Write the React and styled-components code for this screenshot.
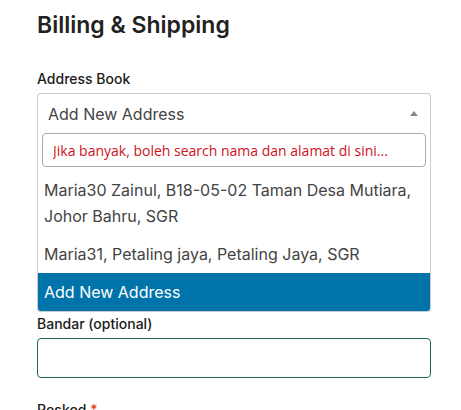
import React from "react";
import styled, { createGlobalStyle } from "styled-components";

const Global = createGlobalStyle`
  html, body { margin: 0; padding: 0; background: #fff; }
  body { font-family: Inter, "Noto Sans", sans-serif; color: #222; }
  * { box-sizing: border-box; }
`;

const Page = styled.div`
  width: 461px;
  height: 410px;
  overflow: hidden;
  padding: 10px 30px 0 37px;
`;

const Title = styled.h2`
  margin: 0;
  font-size: 23px;
  font-weight: 600;
  line-height: 30px;
  color: #222;
`;

const Field = styled.div`
  display: flex;
  flex-direction: column;
  margin-top: ${(p) => p.$mt || 0}px;
`;

const Label = styled.label`
  font-size: 14px;
  font-weight: 500;
  line-height: 18px;
  color: #1a1a1a;
  margin-bottom: 5px;
`;

const Req = styled.span`
  color: #e2401c;
`;

const SelectBox = styled.div`
  border: 1px solid #ccc;
  border-bottom: none;
  border-radius: 4px 4px 0 0;
  height: 40px;
  display: flex;
  align-items: center;
  justify-content: space-between;
  padding: 0 12px 0 10px;
  font-size: 16px;
  color: #444;
`;

const Arrow = styled.span`
  width: 0;
  height: 0;
  border-left: 4px solid transparent;
  border-right: 4px solid transparent;
  border-bottom: 5px solid #888;
`;

const Dropdown = styled.div`
  border: 1px solid #ccc;
  border-top: none;
  border-radius: 0 0 4px 4px;
  overflow: hidden;
  background: #fff;
`;

const SearchWrap = styled.div`
  padding: 0 4px 4px;
`;

const Search = styled.input`
  width: 100%;
  height: 34px;
  border: 1px solid #aaa;
  border-radius: 4px;
  padding: 0 10px;
  font-family: "Open Sans", "Noto Sans", sans-serif;
  font-size: 14px;
  outline: none;
  &::placeholder { color: #d0111b; opacity: 1; }
`;

const Option = styled.div`
  padding: 6px 6px;
  font-size: 16px;
  line-height: 26px;
  color: ${(p) => (p.$active ? "#fff" : "#444")};
  background: ${(p) => (p.$active ? "#0073aa" : "#fff")};
`;

const Input = styled.input`
  height: 40px;
  border: 1px solid #1e6b4b;
  border-radius: 4px;
  width: 100%;
  outline: none;
`;

export default function App() {
  return (
    <>
      <Global />
      <Page>
        <Title>Billing &amp; Shipping</Title>
        <Field $mt={30}>
          <Label>Address Book</Label>
          <SelectBox>
            <span>Add New Address</span>
            <Arrow />
          </SelectBox>
          <Dropdown>
            <SearchWrap>
              <Search placeholder="Jika banyak, boleh search nama dan alamat di sini..." />
            </SearchWrap>
            <Option>Maria30 Zainul, B18-05-02 Taman Desa Mutiara, Johor Bahru, SGR</Option>
            <Option>Maria31, Petaling jaya, Petaling Jaya, SGR</Option>
            <Option $active>Add New Address</Option>
          </Dropdown>
        </Field>
        <Field $mt={3}>
          <Label>Bandar (optional)</Label>
          <Input />
        </Field>
        <Field $mt={23}>
          <Label>
            Poskod <Req>*</Req>
          </Label>
        </Field>
      </Page>
    </>
  );
}
